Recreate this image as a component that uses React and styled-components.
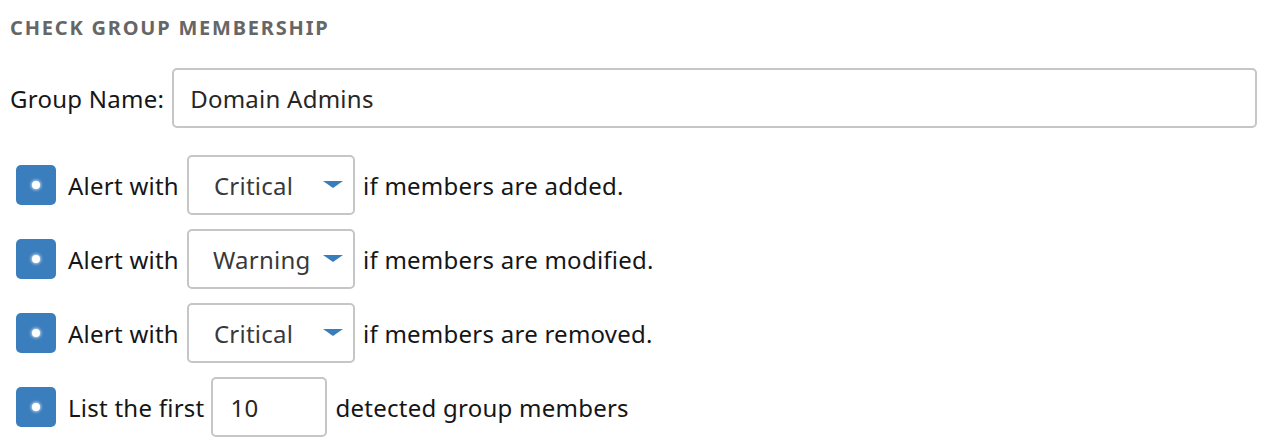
import React from 'react';
import styled, { createGlobalStyle } from 'styled-components';

const GlobalStyle = createGlobalStyle`
	body {
		margin: 0;
		background: #fff;
		font-family: 'Noto Sans', 'Open Sans', sans-serif;
		color: #161616;
	}
`;

const Panel = styled.div`
	padding: 13px 5px 0 10px;
`;

const Heading = styled.h4`
	margin: 0 0 25px;
	font-size: 20px;
	font-weight: 700;
	letter-spacing: 1.8px;
	color: #666;
	line-height: 30px;
`;

const Row = styled.div`
	display: flex;
	align-items: center;
	font-size: 24px;
	letter-spacing: 0.25px;
	margin-bottom: ${(p) => p.gap || 14}px;
	padding-left: ${(p) => p.indent || 0}px;
`;

const Label = styled.span`
	margin-right: ${(p) => p.space || 8}px;
	white-space: nowrap;
`;

const TextBox = styled.div`
	box-sizing: border-box;
	height: 60px;
	width: ${(p) => p.width};
	flex: ${(p) => (p.grow ? 1 : 'none')};
	border: 2px solid #c6c6c6;
	border-radius: 5px;
	display: flex;
	align-items: center;
	padding-left: ${(p) => p.pad || 16}px;
	color: #262626;
	margin-right: 8px;
`;

const Select = styled.div`
	box-sizing: border-box;
	height: 60px;
	width: 168px;
	border: 2px solid #c6c6c6;
	border-radius: 5px;
	display: flex;
	align-items: center;
	justify-content: space-between;
	padding: 0 10px 0 ${(p) => p.pad || 25}px;
	color: #393939;
	margin-right: 8px;
`;

const Caret = styled.span`
	width: 0;
	height: 0;
	border-left: 10px solid transparent;
	border-right: 10px solid transparent;
	border-top: 7px solid #3a7dbd;
	margin-bottom: 2px;
`;

const Check = styled.span`
	box-sizing: border-box;
	width: 40px;
	height: 40px;
	border-radius: 5px;
	background: #3b7ebe;
	margin-right: 12px;
	display: flex;
	align-items: center;
	justify-content: center;

	&::after {
		content: '';
		width: 8px;
		height: 8px;
		border-radius: 50%;
		background: #fff;
		box-shadow: 0 0 3px 1px rgba(255, 255, 255, 0.7);
	}
`;

const AlertRow = ({ level, action, pad }) => (
	<Row indent={6}>
		<Check />
		<Label space={8}>Alert with</Label>
		<Select pad={pad}>
			{level}
			<Caret />
		</Select>
		<Label>if members are {action}.</Label>
	</Row>
);

export default function App() {
	return (
		<>
			<GlobalStyle />
			<Panel>
				<Heading>CHECK GROUP MEMBERSHIP</Heading>
				<Row gap={27}>
					<Label>Group Name:</Label>
					<TextBox grow>Domain Admins</TextBox>
				</Row>
				<AlertRow level="Critical" action="added" />
				<AlertRow level="Warning" action="modified" pad={24} />
				<AlertRow level="Critical" action="removed" />
				<Row indent={6}>
					<Check />
					<Label space={7}>List the first</Label>
					<TextBox width="116px" pad={17}>10</TextBox>
					<Label>detected group members</Label>
				</Row>
			</Panel>
		</>
	);
}
